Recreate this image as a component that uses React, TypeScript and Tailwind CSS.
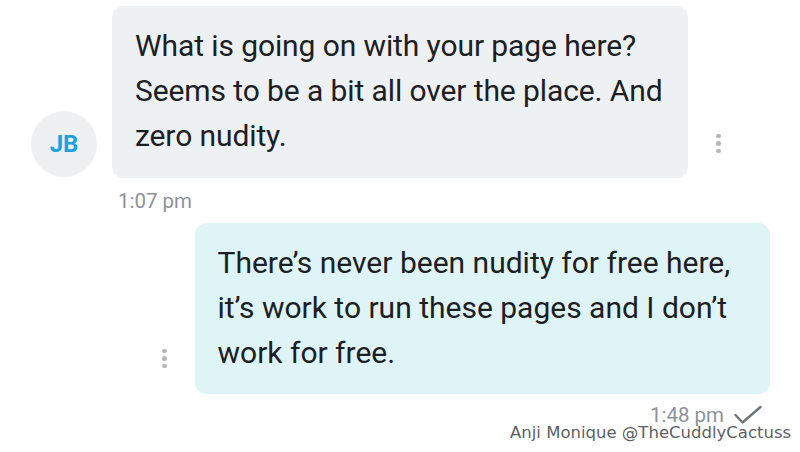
function Dots() {
  return (
    <div className="flex flex-col items-center gap-[3px]">
      <span className="h-[4.5px] w-[4.5px] rounded-full bg-[#b4b8bc]" />
      <span className="h-[4.5px] w-[4.5px] rounded-full bg-[#b4b8bc]" />
      <span className="h-[4.5px] w-[4.5px] rounded-full bg-[#b4b8bc]" />
    </div>
  );
}

function Tick() {
  return (
    <svg width="28" height="20" viewBox="0 0 28 20" fill="none" className="text-[#6f7478]">
      <polyline
        points="1.5,10 8.5,17.5 26.5,2"
        stroke="currentColor"
        strokeWidth="2.4"
        strokeLinecap="round"
        strokeLinejoin="round"
      />
    </svg>
  );
}

export default function App() {
  return (
    <div
      className="relative h-[452px] w-[800px] overflow-hidden bg-white"
      style={{ fontFamily: "Roboto, 'Noto Sans', sans-serif" }}
    >
      {/* incoming message */}
      <div className="flex items-end pt-[6px]">
        <div className="mb-[1px] ml-[31px] flex h-[66px] w-[66px] items-center justify-center rounded-full bg-[#eef0f2] text-[24px] font-bold text-[#1ea1e0]">
          JB
        </div>
        <div className="ml-[15px] w-[576px] whitespace-nowrap rounded-[12px] bg-[#eef1f3] pl-[23px] pt-[17px] pb-[20px] text-[30px] leading-[45px] tracking-[-0.1px] text-[#1c2023]">
          What is going on with your page here?
          <br />
          Seems to be a bit all over the place. And
          <br />
          zero nudity.
        </div>
        <div className="mb-[25px] ml-[28px]">
          <Dots />
        </div>
      </div>
      <div className="ml-[118px] mt-[11px] text-[20.5px] leading-[24px] text-[#8d9398]">
        1:07 pm
      </div>

      {/* outgoing message */}
      <div className="mt-[10px] flex items-end">
        <div className="mb-[26px] ml-[162px]">
          <Dots />
        </div>
        <div className="ml-[28px] w-[575px] whitespace-nowrap rounded-[12px] bg-[#def4f7] pl-[23px] pt-[17px] pb-[19px] text-[30px] leading-[45px] text-[#1c2023]">
          There’s never been nudity for free here,
          <br />
          it’s work to run these pages and I don’t
          <br />
          work for free.
        </div>
      </div>
      <div className="mr-[38px] mt-[9px] flex items-center justify-end gap-[10px] text-[20.5px] leading-[24px] text-[#8d9398]">
        <span>1:48 pm</span>
        <Tick />
      </div>

      {/* watermark */}
      <div
        className="absolute left-[510px] top-[423px] text-[16.5px] leading-[20px] text-[#5c5f62]"
        style={{ fontFamily: "'DejaVu Sans', sans-serif" }}
      >
        Anji Monique @TheCuddlyCactuss
      </div>
    </div>
  );
}
